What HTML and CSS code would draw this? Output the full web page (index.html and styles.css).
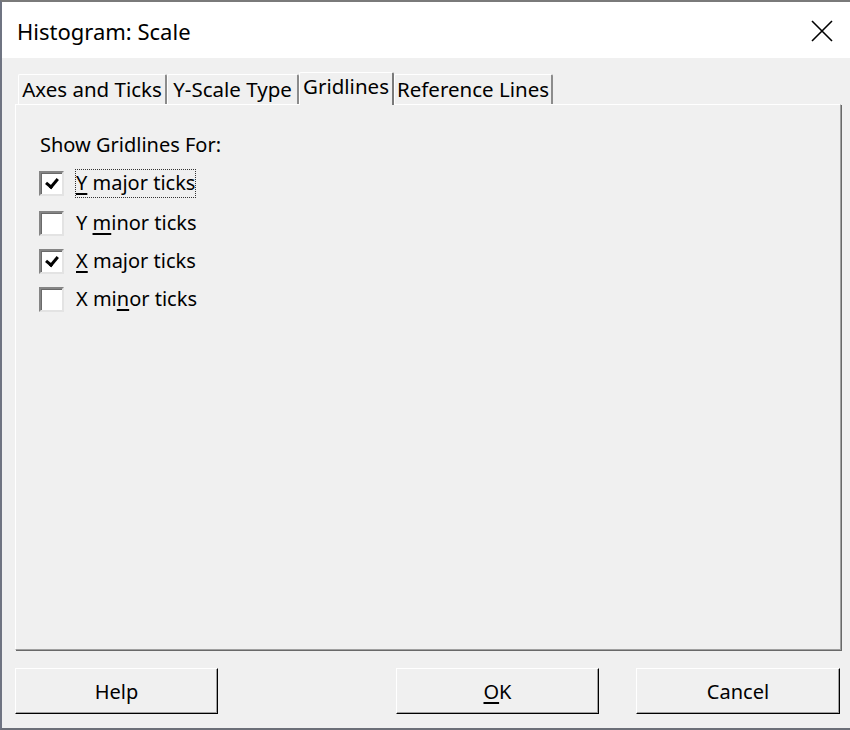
FILE: index.html
```html
<!DOCTYPE html>
<html lang="en">
<head>
    <meta charset="UTF-8">
    <meta name="viewport" content="width=device-width, initial-scale=1.0">
    <title>Histogram: Scale</title>
    <link rel="stylesheet" href="styles.css">
</head>
<body>
    <div class="dialog">
        <header class="titlebar">
            <span class="title">Histogram: Scale</span>
            <svg class="close" width="22" height="22" viewBox="0 0 22 22">
                <path d="M1 1 L21 21 M21 1 L1 21" stroke="#000" stroke-width="1.6" fill="none"/>
            </svg>
        </header>

        <div class="content">
            <div class="tabs">
                <div class="tab tab-axes">Axes and Ticks</div>
                <div class="tab tab-yscale">Y-Scale Type</div>
                <div class="tab tab-grid active">Gridlines</div>
                <div class="tab tab-ref">Reference Lines</div>
            </div>

            <section class="panel">
                <p class="group-label">Show Gridlines For:</p>

                <div class="check first">
                    <span class="box checked"></span>
                    <span class="label focused"><u>Y</u> major ticks</span>
                </div>
                <div class="check">
                    <span class="box"></span>
                    <span class="label">Y <u>m</u>inor ticks</span>
                </div>
                <div class="check">
                    <span class="box checked"></span>
                    <span class="label"><u>X</u> major ticks</span>
                </div>
                <div class="check">
                    <span class="box"></span>
                    <span class="label">X mi<u>n</u>or ticks</span>
                </div>
            </section>

            <footer class="buttons">
                <button class="btn">Help</button>
                <button class="btn btn-ok"><u>O</u>K</button>
                <button class="btn btn-cancel">Cancel</button>
            </footer>
        </div>
    </div>
</body>
</html>
```

FILE: styles.css
```css
body{
    margin: 0;
    font-family: "Noto Sans", "Open Sans", sans-serif;
    font-size: 20px;
    color: #000;
    background: #f0f0f0;
}

.dialog{
    width: 850px;
    height: 730px;
    box-sizing: border-box;
    border-top: 2px solid #7a7a7a;
    border-left: 2px solid #6f7482;
    border-bottom: 2px solid #6c6f78;
    background: #f0f0f0;
    overflow: hidden;
}

/* barra de titulo */
.titlebar{
    height: 56px;
    background: white;
    display: flex;
    align-items: center;
    justify-content: space-between;
    padding: 0 17px 0 15px;
}
.title{
    font-size: 22px;
    padding-top: 1px;
}
.close{
    display: block;
    margin-top: 2px;
}

.content{
    padding: 14px 9px 0 13px;
}

/* abas */
.tabs{
    display: flex;
    align-items: flex-end;
    margin-left: 3px;
    height: 32px;
    position: relative;
    z-index: 1;
}
.tab{
    height: 30px;
    box-sizing: border-box;
    border-top: 1px solid white;
    border-left: 1px solid white;
    border-right: 2px solid #8c8c8c;
    border-radius: 2px 2px 0 0;
    background: #f0f0f0;
    text-align: center;
    line-height: 28px;
    white-space: nowrap;
    font-size: 20.5px;
}
.tab-axes{ width: 149px; }
.tab-yscale{ width: 132px; }
.tab-grid{ width: 95px; }
.tab-ref{ width: 159px; }
.tab.active{
    height: 33px;
    margin-bottom: -1px;
    line-height: 27px;
    border-right-color: #7a7a7a;
}

/* painel */
.panel{
    height: 546px;
    box-sizing: border-box;
    border-top: 1px solid white;
    border-left: 1px solid white;
    border-right: 1px solid #a0a0a0;
    border-bottom: 1px solid #a0a0a0;
    box-shadow: 1px 1px 0 #696969;
    padding: 28px 0 0 23px;
}
.group-label{
    margin: 0 0 0 1px;
    line-height: 24px;
}

.check{
    display: flex;
    align-items: center;
    height: 38px;
}
.check.first{
    margin-top: 6px;
    height: 41px;
}
.box{
    width: 25px;
    height: 25px;
    box-sizing: border-box;
    border: 2px solid;
    border-color: #858585 #e3e3e3 #e3e3e3 #858585;
    box-shadow: inset 1px 1px 0 #6a6a6a;
    background: white;
    position: relative;
}
.box.checked::after{
    content: "";
    position: absolute;
    left: 7px;
    top: 3px;
    width: 5px;
    height: 9px;
    border-right: 3px solid #000;
    border-bottom: 3px solid #000;
    transform: rotate(40deg);
}
.label{
    margin-left: 11px;
    padding: 1px 0 2px 0;
    line-height: 24px;
    border: 1px dotted transparent;
}
.label.focused{
    border-color: #333;
}
.label u{
    text-underline-offset: 3px;
}

/* botoes */
.buttons{
    display: flex;
    margin-top: 18px;
}
.btn{
    width: 203px;
    height: 46px;
    font: inherit;
    background: #f0f0f0;
    border: 1px solid;
    border-color: white black black white;
    box-shadow: inset -1px -1px 0 #a0a0a0;
    padding: 0;
    color: #000;
}
.btn-ok{
    margin-left: 178px;
}
.btn-cancel{
    margin-left: 37px;
    width: 204px;
}
.btn u{
    text-underline-offset: 3px;
}
```
